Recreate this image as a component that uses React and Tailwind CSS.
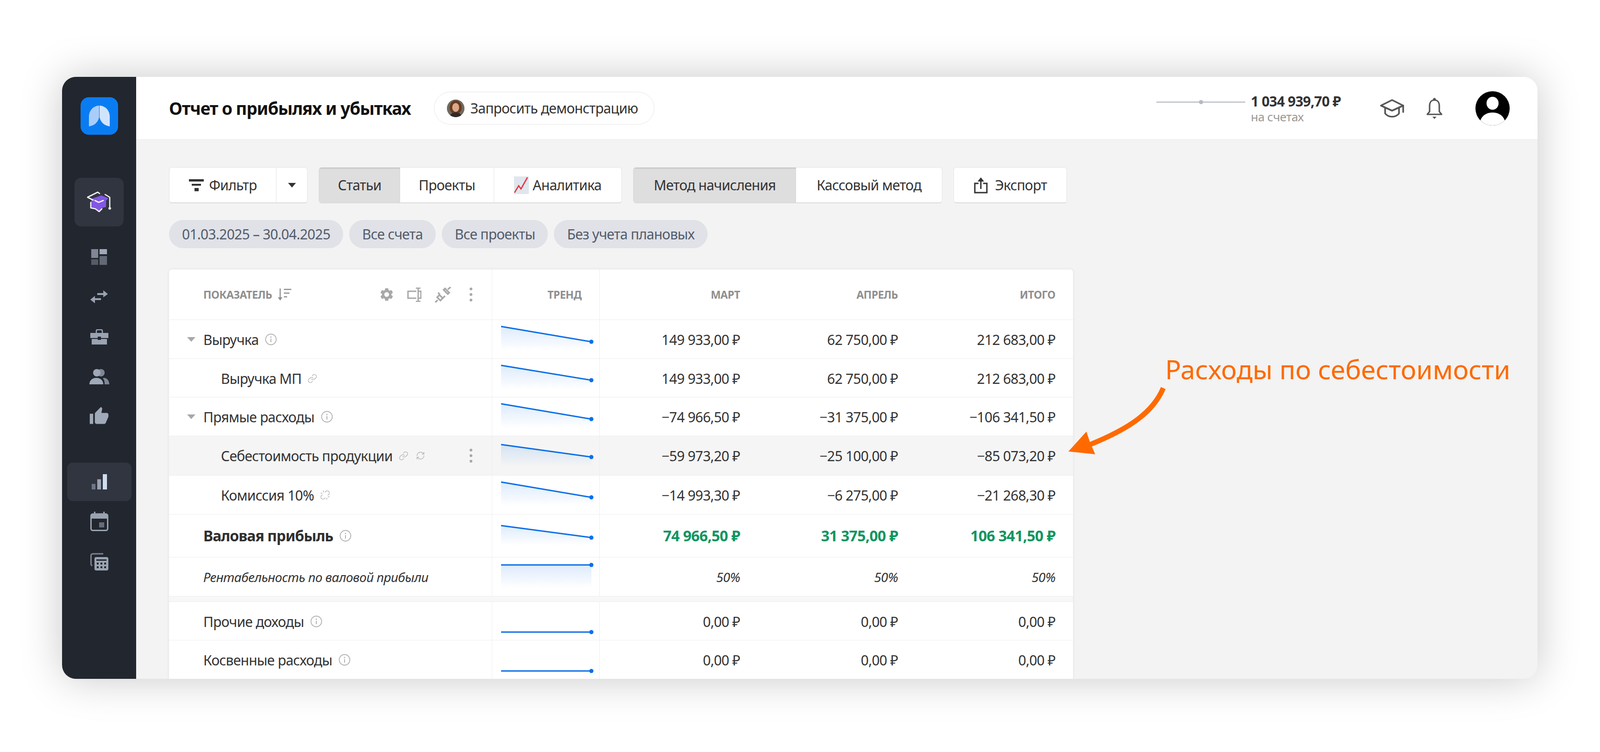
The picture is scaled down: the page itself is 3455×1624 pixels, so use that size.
import { Link, Unlink, RefreshCw } from "lucide-react";
import { MdSettings, MdThumbUp } from "react-icons/md";

const rows = [
  { label: "Выручка", caret: true, info: true, h: "h-[84px]", y1: 14, y2: 47, vals: ["149 933,00 ₽", "62 750,00 ₽", "212 683,00 ₽"] },
  { label: "Выручка МП", sub: true, link: true, h: "h-[83px]", y1: 14, y2: 46, vals: ["149 933,00 ₽", "62 750,00 ₽", "212 683,00 ₽"] },
  { label: "Прямые расходы", caret: true, info: true, h: "h-[84px]", y1: 14, y2: 47, vals: ["−74 966,50 ₽", "−31 375,00 ₽", "−106 341,50 ₽"] },
  { label: "Себестоимость продукции", sub: true, link: true, sync: true, hover: true, h: "h-[85px]", y1: 18, y2: 45, vals: ["−59 973,20 ₽", "−25 100,00 ₽", "−85 073,20 ₽"] },
  { label: "Комиссия 10%", sub: true, unlink: true, h: "h-[84px]", y1: 14, y2: 47, vals: ["−14 993,30 ₽", "−6 275,00 ₽", "−21 268,30 ₽"] },
  { label: "Валовая прибыль", bold: true, info: true, h: "h-[93px]", y1: 24, y2: 50, vals: ["74 966,50 ₽", "31 375,00 ₽", "106 341,50 ₽"] },
  { label: "Рентабельность по валовой прибыли", italic: true, h: "h-[84px]", y1: 16, y2: 16, vals: ["50%", "50%", "50%"] },
];

const rows2 = [
  { label: "Прочие доходы", info: true, h: "h-[83px]", y1: 65, y2: 65, flat: true, vals: ["0,00 ₽", "0,00 ₽", "0,00 ₽"] },
  { label: "Косвенные расходы", info: true, h: "h-[84px]", y1: 66, y2: 66, flat: true, vals: ["0,00 ₽", "0,00 ₽", "0,00 ₽"] },
];

function Trend({ y1, y2, flat, id }) {
  return (
    <svg width="233" height="84" viewBox="0 0 233 84" className="block">
      <defs>
        <linearGradient id={id} x1="0" y1="0" x2="0" y2="1">
          <stop offset="0" stopColor="#0b6fe8" stopOpacity="0.14" />
          <stop offset="1" stopColor="#0b6fe8" stopOpacity="0" />
        </linearGradient>
      </defs>
      {!flat && <path d={`M19 ${y1} L214 ${y2} V66 H19 Z`} fill={`url(#${id})`} />}
      <path d={`M19 ${y1} L214 ${y2}`} stroke="#0b6fe8" strokeWidth="3" fill="none" />
      <circle cx="214" cy={y2} r="4.5" fill="#0b6fe8" />
    </svg>
  );
}

function Info() {
  return (
    <svg width="26" height="26" viewBox="0 0 26 26" fill="none" className="shrink-0">
      <circle cx="13" cy="13" r="11.5" stroke="#b4b4b4" strokeWidth="1.8" />
      <circle cx="13" cy="8" r="1.5" fill="#b4b4b4" />
      <path d="M13 11.5V19" stroke="#b4b4b4" strokeWidth="2" />
    </svg>
  );
}

function Caret() {
  return (
    <svg width="18" height="10" viewBox="0 0 18 10" className="shrink-0">
      <path d="M0 0H18L9 10Z" fill="#a8a8a8" />
    </svg>
  );
}

function Row({ r, id }) {
  let labelCls = "text-[#333] text-[30px] tracking-[-0.025em]";
  let valCls = "text-[#333] text-[30px] tracking-[-0.025em]";
  if (r.bold) {
    labelCls = "text-[#2f2f2f] text-[32px] font-bold tracking-[-0.03em]";
    valCls = "text-[#0e9560] text-[32px] font-bold tracking-[-0.02em]";
  }
  if (r.italic) {
    labelCls = "text-[#333] text-[28px] italic tracking-[-0.02em]";
    valCls = "text-[#333] text-[28px] italic tracking-[-0.02em]";
  }
  return (
    <div className={`grid grid-cols-[697px_233px_341px_341px_340px] border-b border-[#eeeeee] ${r.h} ${r.hover ? "bg-[#f5f5f5]" : ""}`}>
      <div className={`flex items-center ${r.sub ? "pl-[112px]" : r.caret ? "pl-[39px]" : "pl-[74px]"}`}>
        {r.caret && <span className="w-[35px]"><Caret /></span>}
        <span className={labelCls}>{r.label}</span>
        {r.info && <span className="ml-[14px]"><Info /></span>}
        {r.link && <Link size={21} strokeWidth={1.6} color="#b4b4b4" className="ml-[13px]" />}
        {r.unlink && <Unlink size={22} strokeWidth={1.6} color="#b4b4b4" className="ml-[13px]" />}
        {r.sync && <RefreshCw size={20} strokeWidth={1.6} color="#b4b4b4" className="ml-[16px]" />}
        {r.hover && (
          <span className="ml-auto mr-[42px] flex flex-col gap-[6px]">
            <i className="block w-[6px] h-[6px] rounded-full bg-[#a8a8a8]" />
            <i className="block w-[6px] h-[6px] rounded-full bg-[#a8a8a8]" />
            <i className="block w-[6px] h-[6px] rounded-full bg-[#a8a8a8]" />
          </span>
        )}
      </div>
      <div className="border-x border-[#eeeeee]">
        <Trend y1={r.y1} y2={r.y2} flat={r.flat} id={id} />
      </div>
      {r.vals.map((v, i) => (
        <div key={i} className={`flex items-center justify-end pr-[38px] ${valCls}`}>{v}</div>
      ))}
    </div>
  );
}

function Logo() {
  return (
    <div className="w-[81px] h-[81px] rounded-[18px] bg-[#0a7cf2] shrink-0">
      <svg width="81" height="81" viewBox="0 0 81 81">
        <path d="M40 18C26 19 18 30 18 42V63C30 61 38 54 40 43Z" fill="#a9cdf9" />
        <path d="M41 18C55 19 63 30 63 42V63C51 61 43 54 41 43Z" fill="#d0e4fd" />
      </svg>
    </div>
  );
}

function NavCap() {
  return (
    <svg width="54" height="48" viewBox="0 0 54 48" fill="none">
      <path d="M12 16L32 9L47 15L42 20V34L34 36L27 44L20 37L10 36V20Z" fill="#8257e5" />
      <path d="M28 5L24 2L2 13L14 19" stroke="#f3f3f6" strokeWidth="2.6" strokeLinecap="round" strokeLinejoin="round" />
      <path d="M40 7L50 13V36" stroke="#f3f3f6" strokeWidth="2.6" strokeLinecap="round" strokeLinejoin="round" />
      <circle cx="50" cy="37" r="2.8" fill="#f3f3f6" />
      <path d="M18 20L26 24L36 20" stroke="#f3f3f6" strokeWidth="2.6" strokeLinecap="round" strokeLinejoin="round" />
      <path d="M9 24V36L19 38L27 44L33 38" stroke="#f3f3f6" strokeWidth="2.6" strokeLinecap="round" strokeLinejoin="round" />
    </svg>
  );
}

function NavDash() {
  return (
    <svg width="34" height="34" viewBox="0 0 34 34">
      <rect x="0" y="0" width="15" height="19" fill="#7f8795" />
      <rect x="18" y="0" width="16" height="11" fill="#a0a9b8" />
      <rect x="0" y="22" width="15" height="12" fill="#555b67" />
      <rect x="18" y="15" width="16" height="19" fill="#636a76" />
    </svg>
  );
}

function NavArrows() {
  return (
    <svg width="38" height="28" viewBox="0 0 38 28">
      <path d="M15 6H28V0L38 8L28 15V10H15Z" fill="#9aa3b1" />
      <path d="M23 17H10V12L0 20L10 28V21H23Z" fill="#9aa3b1" />
    </svg>
  );
}

function NavBrief() {
  return (
    <svg width="39" height="33" viewBox="0 0 39 33" fill="none">
      <path d="M13 8V3.5C13 2 14 1 15.5 1H23.5C25 1 26 2 26 3.5V8" stroke="#9aa3b1" strokeWidth="2.5" />
      <rect x="0" y="8" width="39" height="11" fill="#9aa3b1" />
      <rect x="3" y="21" width="33" height="12" fill="#9aa3b1" />
      <rect x="16" y="16" width="7" height="7" fill="#22262e" />
    </svg>
  );
}

function NavUsers() {
  return (
    <svg width="43" height="33" viewBox="0 0 43 33">
      <circle cx="25" cy="8" r="8" fill="#7f8795" />
      <path d="M31 19C38 19 43 25 43 33H33C33 27 32 23 29 20Z" fill="#7f8795" />
      <circle cx="16" cy="8" r="8" fill="#a0a9b8" />
      <path d="M0 33C0 25 6 19 15 19C24 19 30 25 30 33Z" fill="#a0a9b8" />
    </svg>
  );
}

function NavBars() {
  return (
    <svg width="33" height="33" viewBox="0 0 33 33">
      <rect x="0" y="21" width="8" height="12" fill="#6f7786" />
      <rect x="12" y="11" width="8" height="22" fill="#98a2b2" />
      <rect x="24" y="0" width="9" height="33" fill="#cddcf0" />
    </svg>
  );
}

function NavCal() {
  return (
    <svg width="39" height="42" viewBox="0 0 39 42" fill="none">
      <rect x="8" y="0" width="3" height="6" fill="#9aa3b1" />
      <rect x="28" y="0" width="3" height="6" fill="#9aa3b1" />
      <rect x="1.5" y="5" width="36" height="35.5" rx="4" stroke="#9aa3b1" strokeWidth="3" />
      <path d="M2 9C2 6 4 5 6 5H33C35 5 37 6 37 9V15H2Z" fill="#9aa3b1" />
      <rect x="19" y="23" width="11" height="11" fill="#666c78" />
    </svg>
  );
}

function NavCalc() {
  return (
    <svg width="39" height="38" viewBox="0 0 39 38" fill="none">
      <path d="M28 2H6C3 2 1.5 3.5 1.5 6V24C1.5 26 2.5 27 4 28" stroke="#7a8290" strokeWidth="3" />
      <rect x="9" y="9" width="30" height="29" rx="4" fill="#9aa3b1" />
      <rect x="13" y="14" width="22" height="3" fill="#22262e" />
      {[14, 22, 30].map((x) => (
        <g key={x}>
          <rect x={x} y="21" width="4" height="4" fill="#22262e" />
          <rect x={x} y="29" width="4" height="4" fill="#22262e" />
        </g>
      ))}
    </svg>
  );
}

function Sidebar() {
  return (
    <div className="w-[160px] shrink-0 bg-[#22262e] flex flex-col items-center pt-[44px]">
      <Logo />
      <div className="mt-[93px] w-[106px] h-[105px] rounded-[14px] bg-[#31353f] flex items-center justify-center shrink-0">
        <NavCap />
      </div>
      <div className="mt-[23px] flex flex-col items-center">
        <div className="h-[86px] flex items-center"><NavDash /></div>
        <div className="h-[86px] flex items-center"><NavArrows /></div>
        <div className="h-[86px] flex items-center"><NavBrief /></div>
        <div className="h-[86px] flex items-center"><NavUsers /></div>
        <div className="h-[86px] flex items-center"><MdThumbUp size={44} color="#a0a9b8" /></div>
      </div>
      <div className="mt-[57px] w-[139px] h-[83px] rounded-[12px] bg-[#31353f] flex items-center justify-center shrink-0">
        <NavBars />
      </div>
      <div className="h-[87px] flex items-center"><NavCal /></div>
      <div className="h-[87px] flex items-center"><NavCalc /></div>
    </div>
  );
}

function Portrait() {
  return (
    <svg width="38" height="38" viewBox="0 0 38 38" className="rounded-full shrink-0">
      <rect width="38" height="38" fill="#6f6a60" />
      <ellipse cx="19" cy="17" rx="13" ry="15" fill="#6a3a1e" />
      <ellipse cx="19" cy="17" rx="7.5" ry="9.5" fill="#d9a98a" />
      <path d="M6 38C7 30 13 28 19 28C25 28 31 30 32 38Z" fill="#2c2a2a" />
    </svg>
  );
}

function TopCap() {
  return (
    <svg width="53" height="40" viewBox="0 0 53 40" fill="none" stroke="#555" strokeWidth="3.6" strokeLinejoin="round" strokeLinecap="round">
      <path d="M26 2L2 14L26 25L50 14Z" />
      <path d="M11 19V31C15 36 21 38 26 38C31 38 37 36 41 31V19" />
      <path d="M50 14V28" />
    </svg>
  );
}

function Bell() {
  return (
    <svg width="37" height="46" viewBox="0 0 37 46" fill="none">
      <path d="M18.5 5C11 5 8 11 8 18V30L3 36H34L29 30V18C29 11 26 5 18.5 5Z" stroke="#555" strokeWidth="3.2" strokeLinejoin="round" />
      <circle cx="18.5" cy="3.5" r="3" fill="#555" />
      <path d="M14 41H23L18.5 46Z" fill="#555" />
    </svg>
  );
}

function UserAvatar() {
  return (
    <svg width="74" height="74" viewBox="0 0 74 74">
      <defs>
        <clipPath id="av"><circle cx="37" cy="37" r="37" /></clipPath>
      </defs>
      <circle cx="37" cy="37" r="37" fill="#000" />
      <g clipPath="url(#av)">
        <ellipse cx="37" cy="26" rx="13" ry="14" fill="#fff" />
        <path d="M9 74C9 55 22 46 37 46C52 46 65 55 65 74Z" fill="#fff" />
      </g>
    </svg>
  );
}

function Header() {
  return (
    <div className="h-[136px] shrink-0 bg-white border-b border-[#e9e9e9] flex items-center pl-[71px] pr-[60px]">
      <h1 className="text-[37px] font-bold text-[#111] tracking-[-0.03em]">Отчет о прибылях и убытках</h1>
      <div className="ml-[50px] h-[71px] w-[476px] rounded-full border border-[#e6e6e6] flex items-center pl-[27px] gap-[13px]">
        <Portrait />
        <span className="text-[30px] text-[#333] tracking-[-0.025em]">Запросить демонстрацию</span>
      </div>
      <div className="ml-auto flex items-center">
        <div className="w-[192px] h-[3px] bg-[#c5c9d1] relative mb-[27px]">
          <span className="absolute left-[92px] top-[-3px] w-[9px] h-[9px] rounded-full bg-[#b5bac3]" />
        </div>
        <div className="ml-[12px] w-[222px] flex flex-col">
          <span className="text-[30px] leading-[36px] font-bold text-[#333] tracking-[-0.025em] whitespace-nowrap">1 034 939,70 ₽</span>
          <span className="text-[26px] leading-[30px] text-[#999] tracking-[-0.02em]">на счетах</span>
        </div>
        <div className="ml-[57px]"><TopCap /></div>
        <div className="ml-[46px]"><Bell /></div>
        <div className="ml-[70px]"><UserAvatar /></div>
      </div>
    </div>
  );
}

function Chart() {
  return (
    <svg width="32" height="38" viewBox="0 0 32 38" className="shrink-0">
      <rect width="32" height="38" fill="#dfe6ee" />
      <path d="M1 35L10 20L15 27L29 2" stroke="#e0353f" strokeWidth="2.6" fill="none" />
    </svg>
  );
}

function Toolbar() {
  const btn = "h-full flex items-center justify-center text-[30px] text-[#333] tracking-[-0.025em]";
  const group = "h-[78px] flex rounded-[6px] bg-white border border-[#e4e4e4] border-b-2 border-b-[#dcdcdc] overflow-hidden";
  const active = "bg-[#dedede] shadow-[inset_0_2px_2px_rgba(0,0,0,0.12)]";
  return (
    <div className="flex gap-[24px]">
      <div className={group}>
        <div className={`${btn} w-[231px] gap-[12px] border-r border-[#e4e4e4]`}>
          <svg width="32" height="26" viewBox="0 0 32 26">
            <rect x="0" y="0" width="32" height="5" fill="#333" />
            <rect x="6" y="10" width="20" height="4" fill="#333" />
            <rect x="12" y="19" width="9" height="7" fill="#333" />
          </svg>
          <span>Фильтр</span>
        </div>
        <div className="w-[66px] flex items-center justify-center">
          <svg width="17" height="10" viewBox="0 0 17 10"><path d="M0 0H17L8.5 10Z" fill="#333" /></svg>
        </div>
      </div>
      <div className={group}>
        <div className={`${btn} ${active} w-[175px]`}>Статьи</div>
        <div className={`${btn} w-[203px] border-r border-[#e4e4e4]`}>Проекты</div>
        <div className={`${btn} w-[275px] gap-[8px]`}><Chart />Аналитика</div>
      </div>
      <div className={group}>
        <div className={`${btn} ${active} w-[351px]`}>Метод начисления</div>
        <div className={`${btn} w-[315px]`}>Кассовый метод</div>
      </div>
      <div className={`${group} w-[245px]`}>
        <div className={`${btn} w-full gap-[14px]`}>
          <svg width="32" height="36" viewBox="0 0 32 36" fill="none">
            <path d="M11 14H3V34H29V14H21" stroke="#333" strokeWidth="3" />
            <path d="M16 26V4" stroke="#333" strokeWidth="3" />
            <path d="M9 10L16 1L23 10Z" fill="#333" />
          </svg>
          <span>Экспорт</span>
        </div>
      </div>
    </div>
  );
}

function Chips() {
  const chip = "h-[61px] px-[28px] rounded-full bg-[#e0e2e7] flex items-center text-[30px] text-[#535b6b] tracking-[-0.025em]";
  return (
    <div className="mt-[36px] flex gap-[13px]">
      <div className={chip}>01.03.2025 – 30.04.2025</div>
      <div className={chip}>Все счета</div>
      <div className={chip}>Все проекты</div>
      <div className={chip}>Без учета плановых</div>
    </div>
  );
}

function TableHead() {
  const th = "flex items-center justify-end pr-[38px] text-[23px] font-bold text-[#8f8f8f] tracking-[-0.02em]";
  return (
    <div className="grid grid-cols-[697px_233px_341px_341px_340px] h-[109px] border-b border-[#eeeeee]">
      <div className="flex items-center pl-[74px] text-[23px] font-bold text-[#8f8f8f] tracking-[-0.02em]">
        <span>ПОКАЗАТЕЛЬ</span>
        <svg width="30" height="30" viewBox="0 0 30 30" fill="none" className="ml-[12px]">
          <path d="M6 2V27" stroke="#8f8f8f" strokeWidth="2.4" />
          <path d="M1 21L6 28L11 21Z" fill="#8f8f8f" />
          <path d="M14 4H30M14 12H26M14 20H21" stroke="#8f8f8f" strokeWidth="2.4" />
        </svg>
        <span className="ml-auto mr-[42px] flex items-center">
          <MdSettings size={34} color="#a8a8a8" />
          <svg width="31" height="31" viewBox="0 0 31 31" fill="none" className="ml-[27px]">
            <path d="M20 8H2V23H20" stroke="#a8a8a8" strokeWidth="3" />
            <path d="M24 1V30M19 1H29M19 30H29" stroke="#a8a8a8" strokeWidth="3" />
            <path d="M24 8H30V23H24" stroke="#a8a8a8" strokeWidth="3" />
          </svg>
          <svg width="35" height="35" viewBox="0 0 35 35" fill="none" className="ml-[29px]">
            <path d="M1 34L6 29" stroke="#a8a8a8" strokeWidth="3.4" />
            <path d="M5 23L12 30L17 25L10 18Z" stroke="#a8a8a8" strokeWidth="3.4" />
            <path d="M11 17L7 13M18 24L22 20" stroke="#a8a8a8" strokeWidth="3.4" />
            <path d="M19 7L28 16L31 13L22 4Z" stroke="#a8a8a8" strokeWidth="3.4" />
            <path d="M28 6L34 1" stroke="#a8a8a8" strokeWidth="3.4" />
          </svg>
          <span className="ml-[40px] flex flex-col gap-[6px]">
            <i className="block w-[6px] h-[6px] rounded-full bg-[#a8a8a8]" />
            <i className="block w-[6px] h-[6px] rounded-full bg-[#a8a8a8]" />
            <i className="block w-[6px] h-[6px] rounded-full bg-[#a8a8a8]" />
          </span>
        </span>
      </div>
      <div className={`${th} border-x border-[#eeeeee]`}>ТРЕНД</div>
      <div className={th}>МАРТ</div>
      <div className={th}>АПРЕЛЬ</div>
      <div className={th}>ИТОГО</div>
    </div>
  );
}

export default function App() {
  return (
    <div className="relative w-[3455px] h-[1624px] bg-white overflow-hidden font-['Noto_Sans',sans-serif] pl-[134px] pt-[166px]">
      <div className="w-[3186px] h-[1300px] flex rounded-[30px] overflow-hidden bg-[#f3f3f3] shadow-[0_0_90px_rgba(0,0,0,0.22)]">
        <Sidebar />
        <div className="flex-1 min-w-0 flex flex-col">
          <Header />
          <div className="pt-[59px] pl-[71px]">
            <Toolbar />
            <Chips />
            <div className="mt-[46px] w-[1952px] bg-white rounded-t-[6px] shadow-[0_0_6px_rgba(0,0,0,0.08)]">
              <TableHead />
              {rows.map((r, i) => <Row key={i} r={r} id={`g${i}`} />)}
              <div className="h-[12px] bg-[#f7f7f7] border-b border-[#eeeeee]" />
              {rows2.map((r, i) => <Row key={i} r={r} id={`h${i}`} />)}
            </div>
          </div>
        </div>
      </div>

      <div className="absolute left-[2516px] top-[764px] font-['Liberation_Sans',sans-serif] text-[57px] leading-[66px] text-[#ff6a00] whitespace-nowrap">
        Расходы по себестоимости
      </div>
      <svg className="absolute left-[2290px] top-[820px]" width="240" height="180" viewBox="2290 820 240 180" fill="none">
        <path d="M2512 838C2490 890 2440 925 2354 960" stroke="#ff6a00" strokeWidth="11" />
        <path d="M2307 975L2346 932L2354 956L2365 981Z" fill="#ff6a00" />
      </svg>
    </div>
  );
}
